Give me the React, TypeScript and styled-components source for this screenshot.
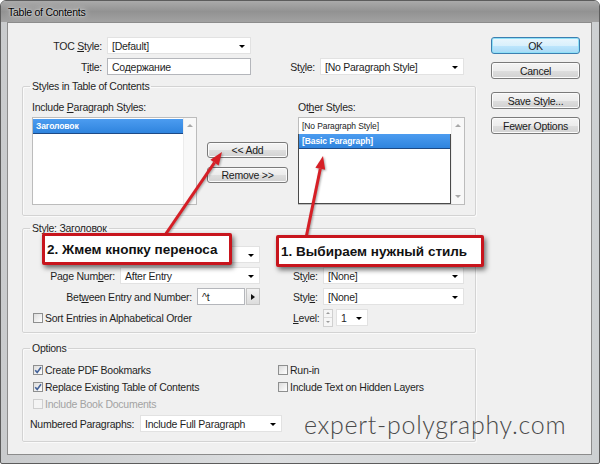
import React from "react";
import styled, { createGlobalStyle } from "styled-components";

const GlobalStyle = createGlobalStyle`
  html, body { margin: 0; padding: 0; background: #ffffff; }
  body {
    font-family: "Liberation Sans", Arial, sans-serif;
    font-size: 10.5px;
    letter-spacing: -0.25px;
    color: #1f1f1f;
  }
  * { box-sizing: border-box; }
`;

const Window = styled.div`
  position: relative;
  width: 600px;
  height: 464px;
  display: flex;
  flex-direction: column;
  background: linear-gradient(90deg, #c9cbcd, #dcdee0 45%, #cdd0d2);
  border: 1px solid #5c5c5c;
  border-radius: 6px 6px 2px 2px;
  overflow: hidden;
`;

const TitleBar = styled.div`
  height: 21px;
  flex: none;
  display: flex;
  align-items: center;
  padding-left: 7px;
  background: linear-gradient(180deg, #aaaaaa 0%, #929292 50%, #a2a2a2 100%);
  color: #000;
  text-shadow: 0 0 6px rgba(255, 255, 255, 0.9), 0 0 2px rgba(255, 255, 255, 0.8);
`;

const Frame = styled.div`
  flex: 1;
  display: flex;
  padding: 0 7px 8px 6px;
`;

const Client = styled.div`
  flex: 1;
  display: flex;
  gap: 15px;
  padding: 14px 10px 0 14px;
  background: #f0f0f0;
  border: 1px solid #8c8c8c;
`;

const MainCol = styled.div`
  width: 454px;
  display: flex;
  flex-direction: column;
`;

const ButtonCol = styled.div`
  width: 89px;
  display: flex;
  flex-direction: column;
`;

const Button = styled.div<{ $mt?: number; $h?: number; $default?: boolean }>`
  height: ${(p) => p.$h ?? 17}px;
  margin-top: ${(p) => p.$mt ?? 0}px;
  display: flex;
  align-items: center;
  justify-content: center;
  border: 1px solid ${(p) => (p.$default ? "#3c7fb1" : "#7a7a7a")};
  border-radius: 3px;
  background: ${(p) =>
    p.$default
      ? "linear-gradient(#eaf6fd 0%, #d9f0fc 50%, #bee6fd 51%, #a7d9f5 100%)"
      : "linear-gradient(#f4f4f4 0%, #ececec 50%, #dedede 51%, #d2d2d2 100%)"};
  box-shadow: inset 0 0 0 1px ${(p) => (p.$default ? "#8fe0f7" : "#fbfbfb")};
  color: #1a1a1a;
  white-space: nowrap;
`;

const FormRow = styled.div<{ $mt?: number; $end?: boolean; $pr?: number }>`
  display: flex;
  align-items: center;
  gap: 5px;
  height: 17px;
  margin-top: ${(p) => p.$mt ?? 0}px;
  padding-right: ${(p) => p.$pr ?? 0}px;
  justify-content: ${(p) => (p.$end ? "flex-end" : "flex-start")};
`;

const FormLabel = styled.span<{ $w?: number; $left?: boolean; $push?: boolean }>`
  width: ${(p) => (p.$w ? `${p.$w}px` : "auto")};
  text-align: ${(p) => (p.$left ? "left" : "right")};
  white-space: nowrap;
  flex: none;
  margin-left: ${(p) => (p.$push ? "auto" : "0")};
`;

const SelectBox = styled.div<{ $w: number }>`
  position: relative;
  flex: none;
  width: ${(p) => p.$w}px;
  height: 17px;
  display: flex;
  align-items: center;
  padding: 0 14px 0 4px;
  background: #ffffff;
  border: 1px solid #e2e2e2;
  white-space: nowrap;
  overflow: hidden;
  &::after {
    content: "";
    position: absolute;
    right: 5px;
    top: 7px;
    border-left: 3px solid transparent;
    border-right: 3px solid transparent;
    border-top: 3px solid #000;
  }
`;

const TextInput = styled.div<{ $w: number }>`
  flex: none;
  width: ${(p) => p.$w}px;
  height: 17px;
  display: flex;
  align-items: center;
  padding-left: 4px;
  background: #ffffff;
  border: 1px solid #b4b6bb;
  white-space: nowrap;
`;

const InputJoin = styled.div`
  display: flex;
  gap: 1px;
`;

const SideArrow = styled.div`
  width: 14px;
  height: 17px;
  display: flex;
  align-items: center;
  justify-content: center;
  background: linear-gradient(#f2f2f2, #dcdcdc);
  border: 1px solid #c4c4c4;
  &::after {
    content: "";
    border-top: 3px solid transparent;
    border-bottom: 3px solid transparent;
    border-left: 4px solid #111;
  }
`;

const Group = styled.fieldset<{ $mt: number; $pt: number; $pb: number }>`
  margin: ${(p) => p.$mt}px 0 0 0;
  padding: ${(p) => p.$pt}px 10px ${(p) => p.$pb}px 9px;
  border: 1px solid #d3d3d3;
  border-radius: 2px;
  box-shadow: inset 1px 1px 0 #fafafa, 1px 1px 0 #fafafa;
  min-width: 0;
`;

const Legend = styled.legend`
  padding: 0 2px;
  margin-left: -2px;
  height: 14px;
  line-height: 14px;
  white-space: nowrap;
`;

const StylesGrid = styled.div`
  display: grid;
  grid-template-columns: 165px 81px 167px;
  grid-template-rows: 14px 88px;
  column-gap: 10px;
  row-gap: 3px;
  align-items: center;
`;

const MoveButtons = styled.div`
  grid-column: 2;
  grid-row: 2;
  align-self: start;
  display: flex;
  flex-direction: column;
  gap: 9px;
  padding-top: 25px;
`;

const ListBox = styled.div`
  height: 88px;
  display: flex;
  background: #ffffff;
  border: 1px solid #bcbcbc;
`;

const ListItems = styled.div`
  flex: 1;
  display: flex;
  flex-direction: column;
  padding-top: 1px;
`;

const ListItem = styled.div<{ $sel?: boolean }>`
  height: 15px;
  flex: none;
  display: flex;
  align-items: center;
  padding-left: 3px;
  font-size: 8.5px;
  letter-spacing: -0.1px;
  font-weight: ${(p) => (p.$sel ? "bold" : "normal")};
  color: ${(p) => (p.$sel ? "#ffffff" : "#222")};
  background: ${(p) => (p.$sel ? "linear-gradient(#4c9cf0, #2f84de)" : "transparent")};
  border-bottom: 1px solid ${(p) => (p.$sel ? "#1d4a86" : "transparent")};
`;

const FocusBox = styled.div`
  flex: 1;
  border: 1px solid #4a4a4a;
  border-top: none;
  margin-left: -1px;
`;

const ScrollTrack = styled.div`
  width: 13px;
  flex: none;
  display: flex;
  flex-direction: column;
  justify-content: space-between;
  align-items: center;
  padding: 6px 0;
  background: #f8f8f8;
  border-left: 1px solid #ececec;
`;

const ScrollArrow = styled.span<{ $down?: boolean }>`
  width: 0;
  height: 0;
  border-left: 3px solid transparent;
  border-right: 3px solid transparent;
  ${(p) => (p.$down ? "border-top: 3px solid #a8a8a8;" : "border-bottom: 3px solid #a8a8a8;")}
`;

const EntryGrid = styled.div`
  display: grid;
  grid-template-columns: 228px 171px;
  grid-auto-rows: 17px;
  column-gap: 33px;
  row-gap: 4px;
`;

const OptionsGrid = styled.div`
  display: grid;
  grid-template-columns: 245px 1fr;
  grid-template-rows: 16px 16px 16px 18px;
  row-gap: 1px;
  & > :last-child {
    margin-top: 3px;
  }
`;

const CheckRow = styled.label<{ $disabled?: boolean }>`
  display: flex;
  align-items: center;
  gap: 2px;
  white-space: nowrap;
  color: ${(p) => (p.$disabled ? "#a3a3a3" : "#1f1f1f")};
`;

const CheckBox = styled.span<{ $disabled?: boolean }>`
  width: 10px;
  height: 10px;
  margin-left: 1px;
  display: flex;
  align-items: center;
  justify-content: center;
  border: 1px solid ${(p) => (p.$disabled ? "#cfcfcf" : "#8e8f8f")};
  background: ${(p) => (p.$disabled ? "#f4f4f4" : "linear-gradient(135deg, #dcdcdc, #ffffff)")};
`;

const SpanRow = styled.div`
  grid-column: 1 / -1;
  display: flex;
  align-items: center;
  gap: 7px;
  margin-left: -2px;
`;

const Spinner = styled.div`
  width: 10px;
  height: 18px;
  flex: none;
  display: flex;
  flex-direction: column;
  border: 1px solid #d0d0d0;
  background: #f6f6f6;
  margin-right: -2px;
`;

const SpinHalf = styled.span<{ $down?: boolean }>`
  flex: 1;
  display: flex;
  align-items: center;
  justify-content: center;
  border-top: ${(p) => (p.$down ? "1px solid #dcdcdc" : "none")};
  &::after {
    content: "";
    border-left: 2px solid transparent;
    border-right: 2px solid transparent;
    ${(p) => (p.$down ? "border-top: 2px solid #9a9a9a;" : "border-bottom: 2px solid #9a9a9a;")}
  }
`;

const ArrowLayer = styled.svg`
  position: absolute;
  left: -1px;
  top: -1px;
  pointer-events: none;
  filter: drop-shadow(1px 1px 1px rgba(0, 0, 0, 0.35));
`;

const Callout = styled.div<{ $x: number; $y: number; $w: number }>`
  position: absolute;
  left: ${(p) => p.$x - 1}px;
  top: ${(p) => p.$y - 1}px;
  width: ${(p) => p.$w}px;
  height: 32px;
  display: flex;
  align-items: center;
  padding-left: 2px;
  background: #ffffff;
  border: 3px solid #c8151d;
  border-radius: 2px;
  box-shadow: 2px 3px 5px rgba(0, 0, 0, 0.55);
  font-family: "Liberation Sans", Arial, sans-serif;
  font-weight: bold;
  font-size: 13.5px;
  letter-spacing: 0;
  color: #111;
  white-space: nowrap;
`;

const Watermark = styled.div`
  position: absolute;
  left: 303px;
  top: 408px;
  font-family: Lato, "DejaVu Sans", sans-serif;
  font-weight: 300;
  font-size: 25px;
  letter-spacing: 0.7px;
  color: #4a4a4a;
  white-space: nowrap;
`;

const Check = ({ on, disabled, children }: { on?: boolean; disabled?: boolean; children: React.ReactNode }) => (
  <CheckRow $disabled={disabled}>
    <CheckBox $disabled={disabled}>
      {on && (
        <svg width="8" height="8" viewBox="0 0 8 8">
          <path d="M1.2 4.2 L3.2 6.4 L7 1.2" fill="none" stroke="#44639a" strokeWidth="1.6" />
        </svg>
      )}
    </CheckBox>
    {children}
  </CheckRow>
);

const Select = ({ w, children }: { w: number; children?: React.ReactNode }) => (
  <SelectBox $w={w}>{children}</SelectBox>
);

export default function App() {
  return (
    <>
      <GlobalStyle />
      <Window>
        <TitleBar>Table of Contents</TitleBar>
        <Frame>
          <Client>
            <MainCol>
              <FormRow $pr={12}>
                <FormLabel $w={80}>
                  TOC <u>S</u>tyle:
                </FormLabel>
                <Select w={144}>[Default]</Select>
              </FormRow>
              <FormRow $mt={4} $pr={12}>
                <FormLabel $w={80}>
                  T<u>i</u>tle:
                </FormLabel>
                <TextInput $w={144}>Содержание</TextInput>
                <FormLabel $push>
                  St<u>y</u>le:
                </FormLabel>
                <Select w={144}>[No Paragraph Style]</Select>
              </FormRow>

              <Group $mt={4} $pt={7} $pb={10}>
                <Legend>Styles in Table of Contents</Legend>
                <StylesGrid>
                  <span>
                    Include <u>P</u>aragraph Styles:
                  </span>
                  <span />
                  <span>
                    Ot<u>h</u>er Styles:
                  </span>
                  <ListBox>
                    <ListItems>
                      <ListItem $sel>Заголовок</ListItem>
                    </ListItems>
                    <ScrollTrack>
                      <ScrollArrow />
                    </ScrollTrack>
                  </ListBox>
                  <MoveButtons>
                    <Button $h={16}>&lt;&lt; Add</Button>
                    <Button $h={16}>Remove &gt;&gt;</Button>
                  </MoveButtons>
                  <ListBox>
                    <ListItems>
                      <ListItem>[No Paragraph Style]</ListItem>
                      <FocusBox>
                        <ListItem $sel>[Basic Paragraph]</ListItem>
                      </FocusBox>
                    </ListItems>
                    <ScrollTrack>
                      <ScrollArrow />
                      <ScrollArrow $down />
                    </ScrollTrack>
                  </ListBox>
                </StylesGrid>
              </Group>

              <Group $mt={5} $pt={11} $pb={6}>
                <Legend>Style: Заголовок</Legend>
                <EntryGrid>
                  <FormRow $end>
                    <Select w={140} />
                  </FormRow>
                  <span />
                  <FormRow $end>
                    <FormLabel>
                      Page Num<u>b</u>er:
                    </FormLabel>
                    <Select w={140}>After Entry</Select>
                  </FormRow>
                  <FormRow>
                    <FormLabel $w={25} $left>
                      St<u>y</u>le:
                    </FormLabel>
                    <Select w={141}>[None]</Select>
                  </FormRow>
                  <FormRow $end>
                    <FormLabel>
                      Bet<u>w</u>een Entry and Number:
                    </FormLabel>
                    <InputJoin>
                      <TextInput $w={48}>^t</TextInput>
                      <SideArrow />
                    </InputJoin>
                  </FormRow>
                  <FormRow>
                    <FormLabel $w={25} $left>
                      Styl<u>e</u>:
                    </FormLabel>
                    <Select w={141}>[None]</Select>
                  </FormRow>
                  <Check>Sort Entries in Alphabetical Order</Check>
                  <FormRow>
                    <FormLabel $w={25} $left>
                      <u>L</u>evel:
                    </FormLabel>
                    <Spinner>
                      <SpinHalf />
                      <SpinHalf $down />
                    </Spinner>
                    <Select w={32}>1</Select>
                  </FormRow>
                </EntryGrid>
              </Group>

              <Group $mt={8} $pt={7} $pb={10}>
                <Legend>Options</Legend>
                <OptionsGrid>
                  <Check on>Create PDF Bookmarks</Check>
                  <Check>Run-in</Check>
                  <Check on>Replace Existing Table of Contents</Check>
                  <Check>Include Text on Hidden Layers</Check>
                  <Check disabled>Include Book Documents</Check>
                  <span />
                  <SpanRow>
                    <FormLabel $w={103} $left>
                      Numbered Paragraphs:
                    </FormLabel>
                    <Select w={142}>Include Full Paragraph</Select>
                  </SpanRow>
                </OptionsGrid>
              </Group>
            </MainCol>

            <ButtonCol>
              <Button $default>OK</Button>
              <Button $mt={8}>Cancel</Button>
              <Button $mt={13}>Save Style...</Button>
              <Button $mt={8}>Fewer Options</Button>
            </ButtonCol>
          </Client>
        </Frame>

        <ArrowLayer width="600" height="464" viewBox="0 0 600 464">
          <line x1="163" y1="238" x2="214.5" y2="162.6" stroke="#d61f26" strokeWidth="3" />
          <polygon points="222,152 218.6,165.5 210.4,159.7" fill="#d61f26" />
          <line x1="306" y1="238" x2="320.3" y2="168.7" stroke="#d61f26" strokeWidth="3" />
          <polygon points="323,156 325.2,169.7 315.4,167.7" fill="#d61f26" />
        </ArrowLayer>

        <Callout $x={42} $y={233} $w={190}>
          2. Жмем кнопку переноса
        </Callout>
        <Callout $x={276} $y={235} $w={208}>
          1. Выбираем нужный стиль
        </Callout>

        <Watermark>expert-polygraphy.com</Watermark>
      </Window>
    </>
  );
}
